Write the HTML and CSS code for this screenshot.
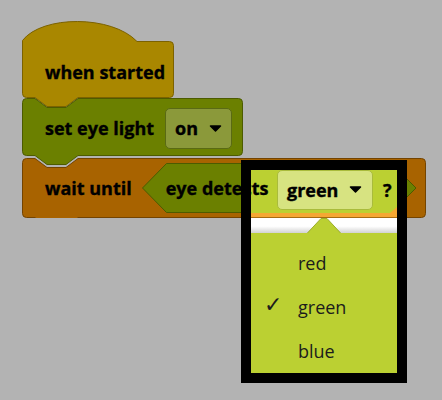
FILE: index.html
```html
<!DOCTYPE html>
<html lang="en">
<head>
  <meta charset="UTF-8" />
  <title>Blocks</title>
  <link rel="stylesheet" href="styles.css">
</head>
<body>
  <div class="workspace">
    <div class="block hat">
      <svg class="shape" width="152" height="88"><path d="M0.5,20.5 C20,-5 90,-5 115,21.5 H147.5 Q151.5,21.5 151.5,25.5 V73.5 Q151.5,77.5 147.5,77.5 H56 L44,86.5 H25 L13,77.5 H4.5 Q0.5,77.5 0.5,73.5 Z"/></svg>
      <span class="label">when started</span>
    </div>

    <div class="block set">
      <svg class="shape" width="221" height="68"><path d="M0.5,4.5 Q0.5,0.5 4.5,0.5 H13 L25,9.5 H44 L56,0.5 H216.5 Q220.5,0.5 220.5,4.5 V53.5 Q220.5,57.5 216.5,57.5 H56 L44,66.5 H25 L13,57.5 H4.5 Q0.5,57.5 0.5,53.5 Z"/></svg>
      <span class="label">set eye light</span>
      <div class="dropdown dim">on
        <svg class="caret" width="13" height="7"><path d="M1.5,1 H11.5 L6.5,6 Z"/></svg>
      </div>
    </div>

    <div class="block wait">
      <svg class="shape" width="404" height="70"><path d="M0.5,4.5 Q0.5,0.5 4.5,0.5 H13 L25,9.5 H44 L56,0.5 H399.5 Q403.5,0.5 403.5,4.5 V55.5 Q403.5,59.5 399.5,59.5 H56 L44,68.5 H25 L13,59.5 H4.5 Q0.5,59.5 0.5,55.5 Z"/></svg>
      <span class="label">wait until</span>
      <div class="bool">
        <svg class="shape" width="275" height="51"><path d="M0.5,25 L24.5,0.5 H249.5 L274,25 L249.5,49.5 H24.5 Z"/></svg>
        <!-- sits above the spotlight frame so its tail shows inside it -->
        <span class="label over">eye detects</span>
      </div>
    </div>
  </div>

  <div class="spotlight">
    <div class="peek">
      <div class="field-row">
        <div class="dropdown bright">green
          <svg class="caret" width="13" height="7"><path d="M1.5,1 H11.5 L6.5,6 Z"/></svg>
        </div>
        <span class="label q">?</span>
      </div>
    </div>
    <div class="menu-head">
      <svg class="menu-arrow" width="34" height="15"><path d="M0,15.5 L14,0.5 H20 L34,15.5"/></svg>
    </div>
    <div class="menu">
      <div class="menu-item"><span class="check"></span>red</div>
      <div class="menu-item"><span class="check">✓</span>green</div>
      <div class="menu-item"><span class="check"></span>blue</div>
    </div>
  </div>
</body>
</html>
```

FILE: styles.css
```css
body {
  margin: 0;
  background: #b3b3b3;
  font-family: "Open Sans", "Liberation Sans", sans-serif;
  overflow: hidden;
}
.workspace {
  display: flex;
  flex-direction: column;
  align-items: flex-start;
  padding: 20px 0 0 22px;
}
.block {
  position: relative;
  display: flex;
  align-items: center;
  box-sizing: border-box;
  padding-left: 23px;
}
.block > *, .bool > * {
  position: relative;
}
.shape {
  position: absolute;
  left: 0;
  top: 0;
  overflow: visible;
}
.label {
  font-size: 18px;
  font-weight: 700;
  color: #000;
  white-space: nowrap;
  -webkit-text-stroke: 0.35px #000;
}
.label.over {
  z-index: 2;
}
.hat {
  width: 152px;
  height: 78px;
  padding-top: 26px;
}
.hat .shape path {
  fill: #a98700;
  stroke: #7c6200;
}
.set {
  width: 221px;
  height: 58px;
  padding-top: 2px;
}
.set .shape path {
  fill: #6b8000;
  stroke: #4c5b00;
}
.wait {
  width: 404px;
  height: 60px;
  margin-top: 2px;
}
.wait > .shape path {
  fill: #a86300;
  stroke: #744400;
}
.bool {
  position: relative;
  display: flex;
  align-items: center;
  width: 275px;
  height: 50px;
  margin-left: 10px;
  padding-left: 24px;
  box-sizing: border-box;
}
.bool .shape path {
  fill: #6b8000;
  stroke: #4c5b00;
}
.dropdown {
  display: flex;
  align-items: center;
  justify-content: space-between;
  box-sizing: border-box;
  padding: 0 9px 0 9px;
  border-radius: 5px;
  font-size: 18px;
  font-weight: 700;
  color: #000;
  -webkit-text-stroke: 0.35px #000;
}
.dropdown.dim {
  width: 67px;
  height: 41px;
  margin-left: 11px;
  background: #8b993a;
  border: 1px solid #5a6a14;
}
.dropdown.bright {
  width: 96px;
  height: 40px;
  padding-right: 10px;
  background: #d7e381;
  border: 1px solid #a9bb3c;
}
.caret path {
  fill: #000;
  stroke: #000;
  stroke-width: 1.5;
  stroke-linejoin: round;
}

/* open dropdown with the spotlight frame */
.spotlight {
  position: absolute;
  z-index: 1;
  left: 241px;
  top: 160px;
  width: 146px;
  height: 203px;
  border: 10px solid #000;
  overflow: hidden;
  background: #bbd032;
}
.peek {
  height: 48px;
  box-sizing: border-box;
  background: #f5a733;
  border-bottom: 1px solid #a86b10;
}
.field-row {
  display: flex;
  align-items: center;
  box-sizing: border-box;
  height: 43px;
  padding: 0 0 4px 26px;
  background: #bbd032;
  clip-path: polygon(0 0, 100% 0, 100% 37px, 139px 43px, 0 43px);
}
.q {
  margin-left: 10px;
}
.menu-head {
  display: flex;
  justify-content: center;
  align-items: flex-end;
  height: 15px;
  background: linear-gradient(#ffffff 0, #ffffff 55%, #d2d2d2 100%);
}
.menu-arrow {
  display: block;
}
.menu-arrow path {
  fill: #bbd032;
  stroke: #9cae2a;
}
.menu {
  padding-top: 8px;
}
.menu-item {
  display: flex;
  align-items: center;
  height: 44px;
  padding-left: 13px;
  font-size: 18px;
  color: #1c1c1c;
}
.check {
  display: inline-block;
  width: 34px;
  margin-top: -6px;
  font-family: "DejaVu Sans", sans-serif;
  font-size: 22px;
}
```
